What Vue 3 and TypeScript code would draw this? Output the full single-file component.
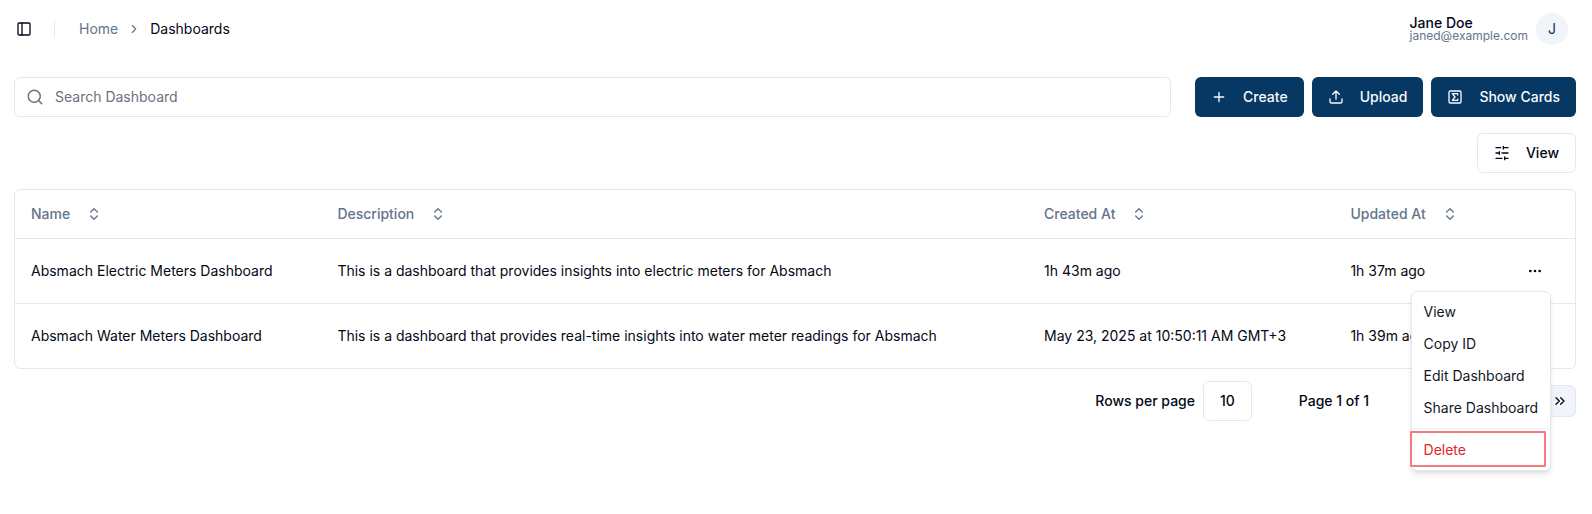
<script setup lang="ts">
import { ref } from 'vue'

interface Dashboard {
  name: string
  description: string
  createdAt: string
  updatedAt: string
}

const columns: string[] = ['Name', 'Description', 'Created At', 'Updated At']

const dashboards: Dashboard[] = [
  {
    name: 'Absmach Electric Meters Dashboard',
    description: 'This is a dashboard that provides insights into electric meters for Absmach',
    createdAt: '1h 43m ago',
    updatedAt: '1h 37m ago',
  },
  {
    name: 'Absmach Water Meters Dashboard',
    description: 'This is a dashboard that provides real-time insights into water meter readings for Absmach',
    createdAt: 'May 23, 2025 at 10:50:11 AM GMT+3',
    updatedAt: '1h 39m ago',
  },
]

const menuItems: string[] = ['View', 'Copy ID', 'Edit Dashboard', 'Share Dashboard']

const pagerIcons: { label: string; path: string }[] = [
  { label: 'First page', path: 'm11 17-5-5 5-5M18 17l-5-5 5-5' },
  { label: 'Previous page', path: 'm15 18-6-6 6-6' },
  { label: 'Next page', path: 'm9 18 6-6-6-6' },
  { label: 'Last page', path: 'm6 17 5-5-5-5M13 17l5-5-5-5' },
]

const search = ref('')
const pageSize = ref('10')
const openRow = ref(0)

function toggle(row: number): void {
  openRow.value = openRow.value === row ? -1 : row
}
</script>

<template>
  <div class="page">
    <header class="topbar">
      <button type="button" class="icon-button" aria-label="Toggle sidebar">
        <svg class="icon" viewBox="0 0 24 24"><rect x="3" y="3" width="18" height="18" rx="2" /><path d="M9 3v18" /></svg>
      </button>
      <span class="divider"></span>
      <nav class="crumbs" aria-label="Breadcrumb">
        <a href="#">Home</a>
        <svg class="icon icon-small" viewBox="0 0 24 24"><path d="m9 18 6-6-6-6" /></svg>
        <span class="current">Dashboards</span>
      </nav>
      <div class="user">
        <div class="user-text">
          <span class="user-name">Jane Doe</span>
          <span class="user-mail">janed@example.com</span>
        </div>
        <span class="avatar">J</span>
      </div>
    </header>

    <main class="content">
      <div class="toolbar">
        <label class="search">
          <svg class="icon icon-search" viewBox="0 0 24 24"><circle cx="11" cy="11" r="8" /><path d="m21 21-4.3-4.3" /></svg>
          <input v-model="search" type="search" placeholder="Search Dashboard" aria-label="Search Dashboard" />
        </label>
        <div class="actions">
          <button type="button" class="button primary">
            <svg class="icon" viewBox="0 0 24 24"><path d="M5 12h14M12 5v14" /></svg>
            Create
          </button>
          <button type="button" class="button primary">
            <svg class="icon" viewBox="0 0 24 24"><path d="M21 15v4a2 2 0 0 1-2 2H5a2 2 0 0 1-2-2v-4M17 8l-5-5-5 5M12 3v12" /></svg>
            Upload
          </button>
          <button type="button" class="button primary">
            <svg class="icon" viewBox="0 0 24 24"><rect x="3" y="3" width="18" height="18" rx="2" /><path d="M16 8.9V7H8l4 5-4 5h8v-1.9" /></svg>
            Show Cards
          </button>
        </div>
      </div>

      <div class="view-row">
        <button type="button" class="button outline">
          <svg class="icon" viewBox="0 0 24 24"><path d="M21 4h-7M10 4H3M21 12h-9M8 12H3M21 20h-5M12 20H3M14 2v4M8 10v4M16 18v4" /></svg>
          View
        </button>
      </div>

      <div class="table-card">
        <table>
          <colgroup>
            <col class="col-name" />
            <col class="col-description" />
            <col class="col-created" />
            <col />
            <col class="col-actions" />
          </colgroup>
          <thead>
            <tr>
              <th v-for="column in columns" :key="column" scope="col">
                <button type="button" class="sort">
                  {{ column }}
                  <svg class="icon" viewBox="0 0 24 24"><path d="m7 15 5 5 5-5M7 9l5-5 5 5" /></svg>
                </button>
              </th>
              <th scope="col" aria-label="Actions"></th>
            </tr>
          </thead>
          <tbody>
            <tr v-for="(row, index) in dashboards" :key="row.name">
              <td>{{ row.name }}</td>
              <td>{{ row.description }}</td>
              <td>{{ row.createdAt }}</td>
              <td>{{ row.updatedAt }}</td>
              <td>
                <div class="row-actions">
                  <button type="button" class="icon-button more" aria-label="Open menu" @click="toggle(index)">
                    <svg class="icon" viewBox="0 0 24 24"><circle cx="12" cy="12" r="1" /><circle cx="19" cy="12" r="1" /><circle cx="5" cy="12" r="1" /></svg>
                  </button>
                  <div v-if="openRow === index" class="menu" role="menu">
                    <button v-for="item in menuItems" :key="item" type="button" class="menu-item" role="menuitem">{{ item }}</button>
                    <div class="menu-separator" role="separator"></div>
                    <button type="button" class="menu-item danger" role="menuitem">Delete</button>
                  </div>
                </div>
              </td>
            </tr>
          </tbody>
        </table>
      </div>

      <footer class="pagination">
        <label class="page-size">
          Rows per page
          <select v-model="pageSize">
            <option>10</option>
            <option>20</option>
            <option>50</option>
          </select>
        </label>
        <span class="page-count">Page 1 of 1</span>
        <div class="pager">
          <button v-for="icon in pagerIcons" :key="icon.label" type="button" class="pager-button" :aria-label="icon.label">
            <svg class="icon" viewBox="0 0 24 24"><path :d="icon.path" /></svg>
          </button>
        </div>
      </footer>
    </main>
  </div>
</template>

<style>
body {
  margin: 0;
  background: #fff;
}
</style>

<style scoped>
.page {
  box-sizing: border-box;
  min-height: 100vh;
  font-family: Inter, "Liberation Sans", sans-serif;
  font-size: 14px;
  line-height: 20px;
  color: #020817;
}

.page *,
.page *::after {
  box-sizing: border-box;
}

button,
input,
select {
  margin: 0;
  padding: 0;
  border: 0;
  background: none;
  font: inherit;
  color: inherit;
}

button {
  cursor: pointer;
}

.icon {
  flex: none;
  width: 16px;
  height: 16px;
  fill: none;
  stroke: currentColor;
  stroke-width: 2;
  stroke-linecap: round;
  stroke-linejoin: round;
}

.icon-small {
  width: 14px;
  height: 14px;
}

.topbar {
  display: flex;
  align-items: center;
  height: 58px;
  padding: 0 24px 0 10px;
}

.icon-button {
  display: flex;
  align-items: center;
  justify-content: center;
  width: 28px;
  height: 28px;
}

.divider {
  width: 1px;
  height: 16px;
  margin: 0 24px 0 16px;
  background: #e2e8f0;
}

.crumbs {
  display: flex;
  align-items: center;
  gap: 9px;
  color: #64748b;
}

.crumbs a {
  color: inherit;
  text-decoration: none;
}

.current {
  color: #020817;
}

.user {
  display: flex;
  align-items: center;
  gap: 8px;
  margin-left: auto;
}

.user-text {
  display: flex;
  flex-direction: column;
}

.user-name {
  font-weight: 500;
  line-height: 14px;
}

.user-mail {
  font-size: 12px;
  line-height: 12px;
  color: #64748b;
}

.avatar {
  display: flex;
  align-items: center;
  justify-content: center;
  width: 32px;
  height: 32px;
  border-radius: 50%;
  background: #f1f5f9;
  color: #073763;
}

.content {
  padding: 19px 16px 0 14px;
}

.toolbar {
  display: flex;
  gap: 24px;
}

.search {
  display: flex;
  flex: 1;
  align-items: center;
  gap: 11px;
  height: 40px;
  padding: 0 12px 0 11px;
  border: 1px solid #e5e7eb;
  border-radius: 6px;
  color: #6b7280;
}

.icon-search {
  width: 18px;
  height: 18px;
}

.search input {
  flex: 1;
  min-width: 0;
  outline: none;
  appearance: none;
  color: #020817;
}

.search input::placeholder {
  color: #6b7280;
  opacity: 1;
}

.actions {
  display: flex;
  gap: 8px;
}

.button {
  display: flex;
  align-items: center;
  gap: 16px;
  height: 40px;
  padding: 0 16px;
  border-radius: 6px;
  font-weight: 500;
  white-space: nowrap;
}

.primary {
  background: #073763;
  color: #f8fafc;
}

.outline {
  border: 1px solid #e2e8f0;
  background: #fff;
}

.view-row {
  display: flex;
  justify-content: flex-end;
  padding: 16px 0;
}

.table-card {
  border: 1px solid #e2e8f0;
  border-radius: 6px;
}

table {
  width: 100%;
  table-layout: fixed;
  border-collapse: separate;
  border-spacing: 0;
}

.col-name,
.col-created {
  width: 19.64%;
}

.col-description {
  width: 45.3%;
}

.col-actions {
  width: 72px;
}

th,
td {
  padding: 0 16px;
  text-align: left;
  white-space: nowrap;
}

th {
  height: 49px;
  border-bottom: 1px solid #e2e8f0;
  color: #64748b;
}

td {
  height: 65px;
  border-bottom: 1px solid #e2e8f0;
}

tbody tr:last-child td {
  height: 64px;
  border-bottom: 0;
}

.sort {
  display: flex;
  align-items: center;
  gap: 16px;
  font-weight: 500;
}

.row-actions {
  position: relative;
  width: 32px;
}

.more {
  width: 32px;
  height: 32px;
}

.menu {
  position: absolute;
  z-index: 10;
  top: calc(100% + 4px);
  right: 0;
  padding: 4px;
  border: 1px solid #e2e8f0;
  border-radius: 6px;
  background: #fff;
  color: #111827;
  box-shadow: 0 4px 6px -1px rgb(0 0 0 / 10%), 0 2px 4px -2px rgb(0 0 0 / 10%);
}

.menu-item {
  position: relative;
  display: block;
  width: 100%;
  padding: 6px 8px;
  text-align: left;
  white-space: nowrap;
}

.menu-separator {
  height: 2px;
  margin: 4px -4px;
  background: #f1f5f9;
}

.danger {
  color: #dc2626;
}

.danger::after {
  content: "";
  position: absolute;
  inset: -3px 0 -1px -6px;
  border: 2px solid #f47c7c;
  border-radius: 1px;
}

.pagination {
  display: flex;
  align-items: center;
  justify-content: flex-end;
  padding-top: 12px;
  font-weight: 500;
}

.page-size {
  display: flex;
  align-items: center;
  gap: 8px;
}

.page-size select {
  width: 49px;
  height: 40px;
  border: 1px solid #e2e8f0;
  border-radius: 6px;
  background: #fff;
  appearance: none;
  text-align: center;
  text-align-last: center;
}

.page-count {
  width: 100px;
  margin: 0 40px 0 32px;
  text-align: center;
}

.pager {
  display: flex;
  gap: 8px;
}

.pager-button {
  display: flex;
  align-items: center;
  justify-content: center;
  width: 32px;
  height: 32px;
  border: 1px solid #e2e8f0;
  border-radius: 6px;
  background: #f1f5f9;
}
</style>
